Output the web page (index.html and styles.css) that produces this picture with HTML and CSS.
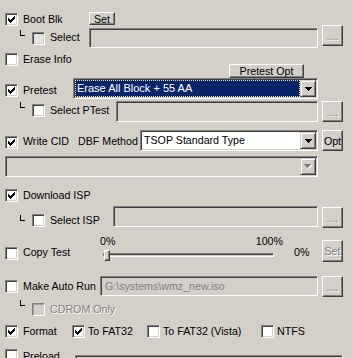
FILE: index.html
```html
<!DOCTYPE html>
<html>
<head>
<meta charset="utf-8">
<link rel="stylesheet" href="styles.css">
</head>
<body>
<div class="panel">

  <div class="row row-boot">
    <span class="cb"><svg class="chk" width="7" height="7" viewBox="0 0 7 7"><path d="M6 0h1v1h-1z M5 1h2v1h-2z M0 2h1v1h-1z M4 2h3v1h-3z M0 3h2v1h-2z M3 3h3v1h-3z M0 4h5v1h-5z M1 5h3v1h-3z M2 6h1v1h-1z"/></svg></span>
    <span class="lbl lbl-boot">Boot Blk</span>
    <span class="btn btn-set">Set</span>
  </div>

  <div class="row sub row-sel">
    <span class="elbow"></span>
    <span class="cb cb-half"></span>
    <span class="lbl lbl-sel">Select</span>
    <span class="field field-sel"></span>
    <span class="btn browse"><span class="dis">....</span></span>
  </div>

  <div class="row row-erase">
    <span class="cb"></span>
    <span class="lbl lbl-erase">Erase Info</span>
    <span class="btn btn-popt">Pretest Opt</span>
  </div>

  <div class="row row-pre">
    <span class="cb"><svg class="chk" width="7" height="7" viewBox="0 0 7 7"><path d="M6 0h1v1h-1z M5 1h2v1h-2z M0 2h1v1h-1z M4 2h3v1h-3z M0 3h2v1h-2z M3 3h3v1h-3z M0 4h5v1h-5z M1 5h3v1h-3z M2 6h1v1h-1z"/></svg></span>
    <span class="lbl lbl-pre">Pretest</span>
    <span class="combo combo-pre">
      <span class="combo-text sel">Erase All Block + 55 AA</span>
      <span class="arrow"><svg width="7" height="4" viewBox="0 0 7 4"><path d="M0 0H7V1H6V2H5V3H4V4H3V3H2V2H1V1H0Z"/></svg></span>
    </span>
  </div>

  <div class="row sub row-ptest">
    <span class="elbow"></span>
    <span class="cb"></span>
    <span class="lbl lbl-ptest">Select PTest</span>
    <span class="field field-ptest"></span>
    <span class="btn browse"><span class="dis">....</span></span>
  </div>

  <div class="row row-cid">
    <span class="cb"><svg class="chk" width="7" height="7" viewBox="0 0 7 7"><path d="M6 0h1v1h-1z M5 1h2v1h-2z M0 2h1v1h-1z M4 2h3v1h-3z M0 3h2v1h-2z M3 3h3v1h-3z M0 4h5v1h-5z M1 5h3v1h-3z M2 6h1v1h-1z"/></svg></span>
    <span class="lbl lbl-cid">Write CID</span>
    <span class="lbl lbl-dbf">DBF Method</span>
    <span class="combo combo-dbf">
      <span class="combo-text">TSOP Standard Type</span>
      <span class="arrow"><svg width="7" height="4" viewBox="0 0 7 4"><path d="M0 0H7V1H6V2H5V3H4V4H3V3H2V2H1V1H0Z"/></svg></span>
    </span>
    <span class="btn btn-opt">Opt</span>
  </div>

  <div class="row row-empty">
    <span class="combo combo-empty">
      <span class="combo-text"></span>
      <span class="arrow"><svg width="8" height="5" viewBox="0 0 8 5"><path class="sh" d="M1 1H8V2H7V3H6V4H5V5H4V4H3V3H2V2H1Z"/><path class="fg" d="M0 0H7V1H6V2H5V3H4V4H3V3H2V2H1V1H0Z"/></svg></span>
    </span>
  </div>

  <div class="row row-isp">
    <span class="cb"><svg class="chk" width="7" height="7" viewBox="0 0 7 7"><path d="M6 0h1v1h-1z M5 1h2v1h-2z M0 2h1v1h-1z M4 2h3v1h-3z M0 3h2v1h-2z M3 3h3v1h-3z M0 4h5v1h-5z M1 5h3v1h-3z M2 6h1v1h-1z"/></svg></span>
    <span class="lbl">Download ISP</span>
  </div>

  <div class="row sub row-selisp">
    <span class="elbow"></span>
    <span class="cb"></span>
    <span class="lbl lbl-selisp">Select ISP</span>
    <span class="field field-isp"></span>
    <span class="btn browse"><span class="dis">....</span></span>
  </div>

  <div class="row row-copy">
    <span class="cb"></span>
    <span class="lbl lbl-copy">Copy Test</span>
    <div class="slider">
      <div class="slider-marks"><span>0%</span><span>100%</span></div>
      <div class="track-wrap">
        <div class="track"></div>
        <div class="thumb"></div>
      </div>
    </div>
    <span class="lbl lbl-pct">0%</span>
    <span class="btn btn-set2"><span class="dis">Set</span></span>
  </div>

  <div class="row row-auto">
    <span class="cb"></span>
    <span class="lbl lbl-auto">Make Auto Run</span>
    <span class="field field-auto"><span class="dis-text">G:\systems\wmz_new.iso</span></span>
    <span class="btn browse"><span class="dis">....</span></span>
  </div>

  <div class="row sub row-cdrom">
    <span class="elbow"></span>
    <span class="cb cb-dis"></span>
    <span class="lbl dis">CDROM Only</span>
  </div>

  <div class="row row-format">
    <span class="cb"><svg class="chk" width="7" height="7" viewBox="0 0 7 7"><path d="M6 0h1v1h-1z M5 1h2v1h-2z M0 2h1v1h-1z M4 2h3v1h-3z M0 3h2v1h-2z M3 3h3v1h-3z M0 4h5v1h-5z M1 5h3v1h-3z M2 6h1v1h-1z"/></svg></span>
    <span class="lbl lbl-format">Format</span>
    <span class="cb opt-cb"><svg class="chk" width="7" height="7" viewBox="0 0 7 7"><path d="M6 0h1v1h-1z M5 1h2v1h-2z M0 2h1v1h-1z M4 2h3v1h-3z M0 3h2v1h-2z M3 3h3v1h-3z M0 4h5v1h-5z M1 5h3v1h-3z M2 6h1v1h-1z"/></svg></span>
    <span class="lbl opt-lbl lbl-fat">To FAT32</span>
    <span class="cb opt-cb"></span>
    <span class="lbl opt-lbl lbl-vista">To FAT32 (Vista)</span>
    <span class="cb opt-cb"></span>
    <span class="lbl opt-lbl">NTFS</span>
  </div>

  <div class="row row-preload">
    <span class="cb"></span>
    <span class="lbl lbl-preload">Preload</span>
    <span class="field field-preload"></span>
  </div>

</div>
</body>
</html>
```

FILE: styles.css
```css
html, body {
  margin: 0;
  padding: 0;
  width: 353px;
  height: 358px;
  overflow: hidden;
  background: #d4d0c8;
}

body {
  font-family: "Liberation Sans", Arial, sans-serif;
  font-size: 8pt;
  color: #000;
}

.panel {
  display: flex;
  flex-direction: column;
  padding: 12px 0 0 5px;
}

.row {
  display: flex;
  align-items: flex-start;
  flex-shrink: 0;
}

/* generic controls */
.cb {
  box-sizing: border-box;
  width: 13px;
  height: 13px;
  flex: 0 0 13px;
  border: 1px solid;
  border-color: #808080 #fff #fff #808080;
  box-shadow: inset 1px 1px #404040, inset -1px -1px #d4d0c8;
  background: #fff;
  display: flex;
  align-items: center;
  justify-content: center;
}

.cb-half { background: #e6e4df; }
.cb-dis {
  background: #d4d0c8;
  box-shadow: inset 1px 1px #a0a0a0, inset -1px -1px #d4d0c8;
}

.chk { display: block; fill: #000; }

.lbl {
  line-height: 14px;
  white-space: nowrap;
  margin-left: 5px;
  flex-shrink: 0;
}

.dis {
  color: #808080;
  text-shadow: 1px 1px 0 #fff;
}

.elbow {
  box-sizing: border-box;
  width: 5px;
  height: 6px;
  flex: 0 0 5px;
  border-left: 1px solid #000;
  border-bottom: 1px solid #000;
  margin-left: 15px;
}

.sub .cb { margin-left: 7px; }

.btn {
  box-sizing: border-box;
  display: flex;
  align-items: center;
  justify-content: center;
  flex-shrink: 0;
  border: 1px solid;
  border-color: #fff #404040 #404040 #fff;
  box-shadow: inset -1px -1px #808080, inset 1px 1px #d4d0c8;
  background: #d4d0c8;
  line-height: 12px;
  white-space: nowrap;
}

.browse {
  width: 21px;
  height: 21px;
  margin-left: 4px;
}

.field {
  box-sizing: border-box;
  display: flex;
  align-items: center;
  flex-shrink: 0;
  border: 1px solid;
  border-color: #808080 #fff #fff #808080;
  box-shadow: inset 1px 1px #404040, inset -1px -1px #d4d0c8;
  background: #d4d0c8;
  height: 21px;
}

.combo {
  box-sizing: border-box;
  display: flex;
  flex-shrink: 0;
  height: 21px;
  padding: 1px;
  border: 1px solid;
  border-color: #808080 #fff #fff #808080;
  box-shadow: inset 1px 1px #404040, inset -1px -1px #d4d0c8;
  background: #fff;
}

.combo-text {
  flex: 1;
  height: 17px;
  line-height: 17px;
  padding-left: 2px;
  white-space: nowrap;
  overflow: hidden;
  font-size: 11px;
}

.combo-text.sel {
  background: #0a246a;
  color: #fff;
  outline: 1px dotted #e8e8b0;
  outline-offset: -1px;
}

.arrow {
  box-sizing: border-box;
  width: 16px;
  height: 17px;
  flex: 0 0 16px;
  display: flex;
  align-items: center;
  justify-content: center;
  border: 1px solid;
  border-color: #d4d0c8 #404040 #404040 #d4d0c8;
  box-shadow: inset 1px 1px #fff, inset -1px -1px #808080;
  background: #d4d0c8;
}

.arrow svg { display: block; fill: #000; }
.arrow .sh { fill: #fff; }
.arrow .fg { fill: #808080; }

/* row: Boot Blk */
.row-boot { height: 13px; }
.row-boot .cb { margin-top: 1px; }
.lbl-boot { width: 66px; line-height: 13px; margin-top: 1px; }
.btn-set { width: 26px; height: 13px; }

/* row: Select */
.row-sel { height: 22px; }
.row-sel .elbow { margin-top: 5px; }
.row-sel .cb { margin-top: 7px; }
.lbl-sel { width: 39px; margin-top: 5px; }
.field-sel { width: 229px; height: 20px; margin-top: 3px; }

/* row: Erase Info + Pretest Opt */
.row-erase { height: 26px; margin-top: 5px; }
.row-erase .cb { margin-top: 1px; }
.lbl-erase { width: 206px; line-height: 13px; margin-top: 1px; }
.btn-popt { width: 75px; height: 14px; margin-top: 12px; }

/* row: Pretest */
.row-pre { height: 21px; }
.row-pre .cb { margin-top: 6px; }
.lbl-pre { width: 50px; margin-top: 5px; }
.combo-pre { width: 245px; }

/* row: Select PTest */
.row-ptest { height: 21px; margin-top: 2px; }
.row-ptest .elbow { margin-top: 1px; }
.row-ptest .cb { margin-top: 3px; }
.lbl-ptest { width: 66px; margin-top: 2px; }
.field-ptest { width: 202px; }

/* row: Write CID */
.row-cid { height: 21px; margin-top: 8px; }
.row-cid .cb { margin-top: 6px; }
.lbl-cid { width: 55px; margin-top: 4px; }
.lbl-dbf { width: 62px; margin-left: 0; margin-top: 4px; }
.combo-dbf { width: 178px; }
.combo-dbf .combo-text { font-size: 8pt; }
.btn-opt { width: 21px; height: 21px; margin-left: 4px; }

/* row: empty combo */
.row-empty { height: 21px; margin-top: 5px; }
.combo-empty { width: 313px; background: #d4d0c8; }

/* row: Download ISP */
.row-isp { height: 14px; margin-top: 11px; }
.row-isp .cb { margin-top: 1px; }

/* row: Select ISP */
.row-selisp { height: 21px; margin-top: 4px; }
.row-selisp .elbow { margin-top: 9px; }
.row-selisp .cb { margin-top: 8px; }
.lbl-selisp { width: 63px; margin-top: 7px; }
.field-isp { width: 205px; }
.row-selisp .browse { margin-top: 1px; }

/* row: Copy Test */
.row-copy { height: 28px; margin-top: 8px; }
.row-copy .cb { margin-top: 12px; }
.lbl-copy { width: 77px; margin-top: 10px; }

.slider {
  width: 185px;
  flex: 0 0 185px;
  display: flex;
  flex-direction: column;
}

.slider-marks {
  display: flex;
  justify-content: space-between;
  line-height: 13px;
  height: 13px;
  padding-right: 2px;
}

.track-wrap {
  position: relative;
  margin-left: 3px;
  width: 171px;
  height: 13px;
}

.track {
  box-sizing: border-box;
  margin-top: 5px;
  height: 4px;
  border: 1px solid;
  border-color: #808080 #fff #fff #808080;
  box-shadow: inset 1px 1px #404040, inset -1px -1px #d4d0c8;
}

.thumb {
  position: absolute;
  left: 1px;
  top: 2px;
  box-sizing: border-box;
  width: 6px;
  height: 11px;
  border: 1px solid;
  border-color: #fff #404040 #404040 #fff;
  box-shadow: inset -1px -1px #808080;
  background: #d4d0c8;
}

.lbl-pct { width: 28px; margin-left: 9px; margin-top: 10px; }
.btn-set2 { width: 21px; height: 22px; margin-top: 5px; }

/* row: Make Auto Run */
.row-auto { height: 21px; margin-top: 13px; }
.row-auto .cb { margin-top: 4px; }
.lbl-auto { width: 77px; margin-top: 3px; }
.field-auto { width: 218px; height: 20px; padding-left: 4px; }
.dis-text { color: #808080; white-space: nowrap; }

/* row: CDROM Only */
.row-cdrom { height: 16px; margin-top: 3px; }
.row-cdrom .cb { margin-top: 3px; }
.row-cdrom .lbl { margin-top: 2px; }

/* row: Format */
.row-format { height: 14px; margin-top: 8px; }
.row-format .cb { margin-top: 1px; }
.lbl-format { width: 49px; }
.opt-lbl { margin-left: 3px; }
.lbl-fat { width: 59px; }
.lbl-vista { width: 98px; }

/* row: Preload */
.row-preload { height: 20px; margin-top: 11px; }
.lbl-preload { width: 52px; }
.field-preload { width: 268px; height: 20px; margin-top: 6px; }
```
